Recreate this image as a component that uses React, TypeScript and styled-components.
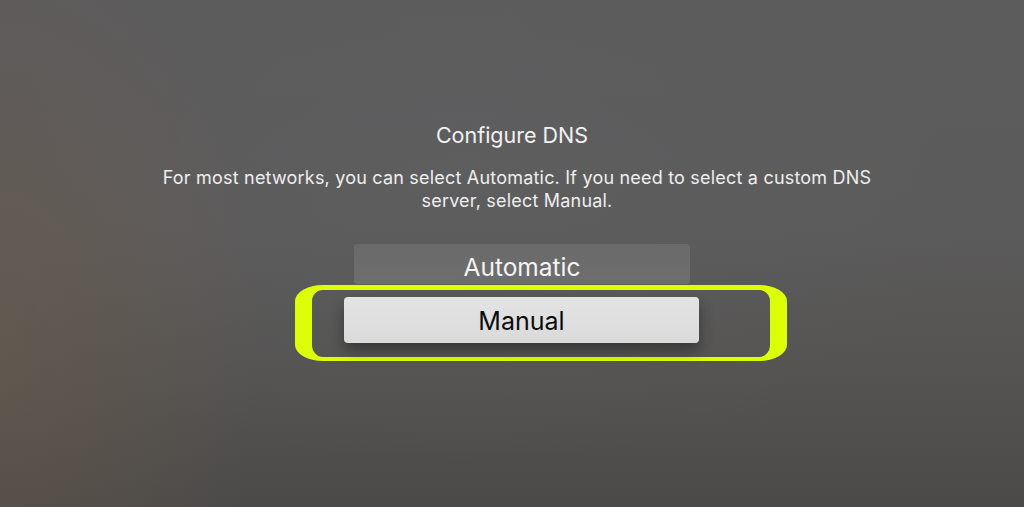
import React from "react";
import styled, { createGlobalStyle } from "styled-components";

const Global = createGlobalStyle`
  html, body { margin: 0; padding: 0; }
  body { font-family: Inter, Roboto, "Liberation Sans", sans-serif; }
`;

const Screen = styled.div`
  width: 1024px;
  height: 507px;
  overflow: hidden;
  display: flex;
  flex-direction: column;
  align-items: center;
  box-sizing: border-box;
  padding-top: 121px;
  background:
    radial-gradient(ellipse 260px 420px at 0% 70%, rgba(112, 92, 72, 0.45), rgba(112, 92, 72, 0) 100%),
    radial-gradient(ellipse 500px 260px at 45% 40%, rgba(100, 100, 104, 0.25), rgba(100, 100, 104, 0) 100%),
    linear-gradient(180deg, #5d5c5d 0%, #5c5b5b 45%, #545352 75%, #4b4a49 100%);
`;

const Title = styled.h1`
  margin: 0;
  font-family: Inter, Roboto, "Liberation Sans", sans-serif;
  font-weight: 400;
  font-size: 21.5px;
  line-height: 28px;
  color: #f1f1f1;
`;

const Description = styled.p`
  margin: 17px 0 0 10px;
  width: 716px;
  text-align: center;
  font-family: Inter, Roboto, "Liberation Sans", sans-serif;
  font-size: 18px;
  letter-spacing: 0.2px;
  line-height: 23px;
  color: #eeeeee;
`;

const Options = styled.div`
  margin-top: 32px;
  display: flex;
  flex-direction: column;
  align-items: center;
`;

const OptionButton = styled.button<{ $focused?: boolean }>`
  box-sizing: border-box;
  border: none;
  border-radius: ${(p) => (p.$focused ? "4px" : "3px")};
  font-family: Inter, Roboto, "Liberation Sans", sans-serif;
  display: flex;
  align-items: center;
  justify-content: center;
  padding: ${(p) => (p.$focused ? "1px 0 0" : "5px 0 0")};
  cursor: pointer;
  width: ${(p) => (p.$focused ? "355px" : "336px")};
  height: ${(p) => (p.$focused ? "46px" : "40px")};
  font-size: ${(p) => (p.$focused ? "25px" : "24.5px")};
  color: ${(p) => (p.$focused ? "#0c0c0c" : "#f4f4f4")};
  background: ${(p) =>
    p.$focused
      ? "linear-gradient(180deg, #e4e4e4 0%, #dadada 100%)"
      : "linear-gradient(180deg, #6a6a6a 0%, #6e6e6e 100%)"};
  box-shadow: ${(p) =>
    p.$focused ? "0 8px 14px rgba(0,0,0,0.35)" : "none"};
`;

const AutoSlot = styled.div`
  margin-left: 20px;
  display: flex;
`;

const Highlight = styled.div`
  margin-top: 1px;
  margin-left: 58px;
  box-sizing: border-box;
  width: 492px;
  height: 76px;
  border-style: solid;
  border-color: #dcff05;
  border-width: 5px 17px 4px 17px;
  border-radius: 28px / 16px;
  padding: 7px 71px 0 32px;
  display: flex;
  align-items: flex-start;
`;

export default function App() {
  return (
    <>
      <Global />
      <Screen>
        <Title>Configure DNS</Title>
        <Description>
          For most networks, you can select Automatic. If you need to select a custom DNS server, select Manual.
        </Description>
        <Options>
          <AutoSlot>
            <OptionButton>Automatic</OptionButton>
          </AutoSlot>
          <Highlight>
            <OptionButton $focused>Manual</OptionButton>
          </Highlight>
        </Options>
      </Screen>
    </>
  );
}
